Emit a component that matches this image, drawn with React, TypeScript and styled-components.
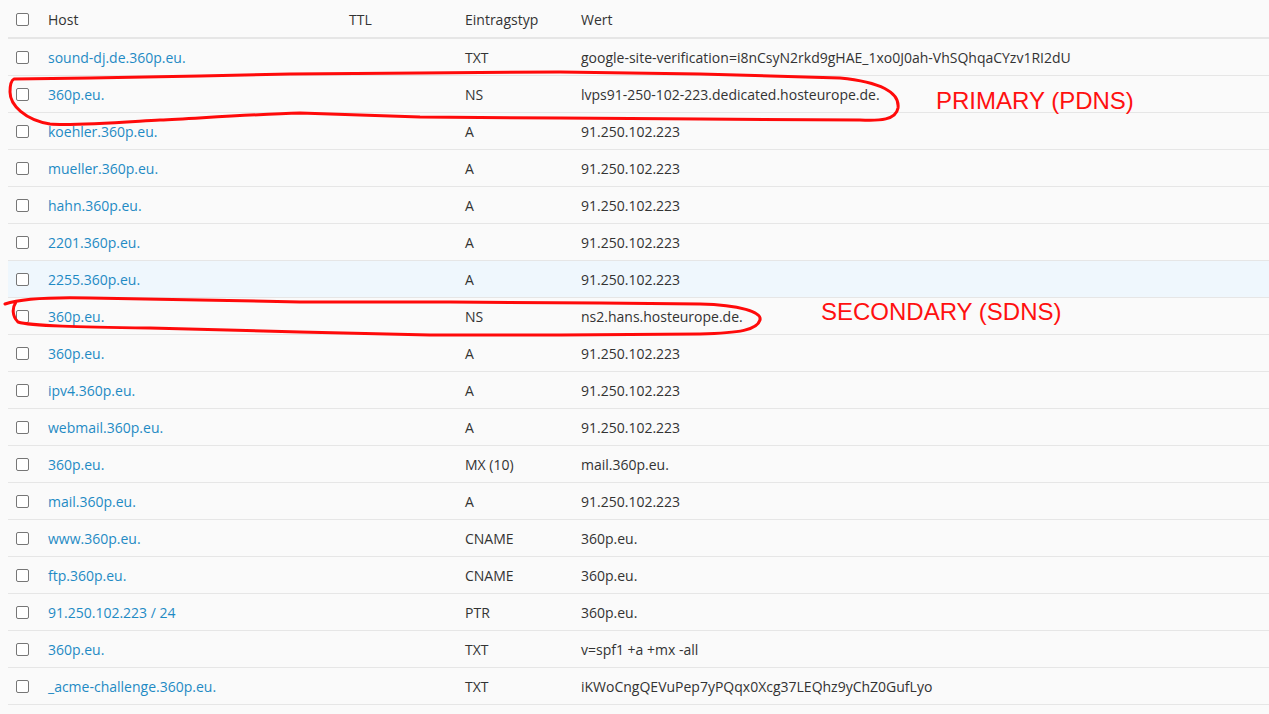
import React from "react";
import styled, { createGlobalStyle } from "styled-components";

const Global = createGlobalStyle`
  html, body { margin: 0; padding: 0; background: #fafafa; }
  body { font-family: "Open Sans", "Noto Sans", Arial, sans-serif; color: #333; }
`;

const Page = styled.div`
  position: relative;
  width: 1269px;
  height: 714px;
  overflow: hidden;
  padding-left: 8px;
  box-sizing: border-box;
  background: #fafafa;
`;

const Table = styled.div`
  display: flex;
  flex-direction: column;
`;

const Row = styled.div<{ $head?: boolean; $hl?: boolean }>`
  display: grid;
  grid-template-columns: 32px 301px 116px 116px 1fr;
  align-items: center;
  height: ${(p) => (p.$head ? "35px" : "36px")};
  padding-top: ${(p) => (p.$head ? "2px" : "0")};
  border-bottom: ${(p) => (p.$head ? "2px solid #e6e6e6" : "1px solid #e6e6e6")};
  background: ${(p) => (p.$hl ? "#eff7fd" : "transparent")};
  font-size: 14px;
  line-height: 19px;
`;

const Cell = styled.div`
  padding: 0 8px;
  white-space: nowrap;
  display: flex;
  align-items: center;
`;

const Box = styled.span`
  display: inline-block;
  width: 11px;
  height: 11px;
  border: 1px solid #767676;
  border-radius: 2px;
  background: #fff;
`;

const HostLink = styled.span`
  color: #1f8ac4;
`;

const Overlay = styled.svg`
  position: absolute;
  left: 0;
  top: 0;
  pointer-events: none;
`;

const Note = styled.div<{ $x: number; $y: number }>`
  position: absolute;
  left: ${(p) => p.$x}px;
  top: ${(p) => p.$y}px;
  font-family: "Liberation Sans", Arial, sans-serif;
  font-size: 24px;
  line-height: 24px;
  color: #ff1010;
  white-space: nowrap;
`;

const IP = "91.250.102.223";
const rows: [string, string, string][] = [
  ["sound-dj.de.360p.eu.", "TXT", "google-site-verification=i8nCsyN2rkd9gHAE_1xo0J0ah-VhSQhqaCYzv1RI2dU"],
  ["360p.eu.", "NS", "lvps91-250-102-223.dedicated.hosteurope.de."],
  ["koehler.360p.eu.", "A", IP],
  ["mueller.360p.eu.", "A", IP],
  ["hahn.360p.eu.", "A", IP],
  ["2201.360p.eu.", "A", IP],
  ["2255.360p.eu.", "A", IP],
  ["360p.eu.", "NS", "ns2.hans.hosteurope.de."],
  ["360p.eu.", "A", IP],
  ["ipv4.360p.eu.", "A", IP],
  ["webmail.360p.eu.", "A", IP],
  ["360p.eu.", "MX (10)", "mail.360p.eu."],
  ["mail.360p.eu.", "A", IP],
  ["www.360p.eu.", "CNAME", "360p.eu."],
  ["ftp.360p.eu.", "CNAME", "360p.eu."],
  ["91.250.102.223 / 24", "PTR", "360p.eu."],
  ["360p.eu.", "TXT", "v=spf1 +a +mx -all"],
  ["_acme-challenge.360p.eu.", "TXT", "iKWoCngQEVuPep7yPQqx0Xcg37LEQhz9yChZ0GufLyo"],
];

export default function App() {
  return (
    <Page>
      <Global />
      <Table>
        <Row $head>
          <Cell><Box /></Cell>
          <Cell>Host</Cell>
          <Cell>TTL</Cell>
          <Cell>Eintragstyp</Cell>
          <Cell>Wert</Cell>
        </Row>
        {rows.map(([h, t, v], i) => (
          <Row key={i} $hl={i === 6}>
            <Cell><Box /></Cell>
            <Cell><HostLink>{h}</HostLink></Cell>
            <Cell></Cell>
            <Cell>{t}</Cell>
            <Cell>{v}</Cell>
          </Row>
        ))}
      </Table>
      <Overlay width="1269" height="714" viewBox="0 0 1269 714">
        <path
          d="M 14 79 L 90 78 L 200 76 L 290 74 L 420 73 L 560 72 L 700 74 L 840 78 C 880 82, 900 92, 898 108 C 896 120, 880 121, 860 120 L 700 119 L 560 118 L 420 117 L 300 113 C 260 114, 200 118, 160 120 C 110 123, 70 126, 50 124 C 25 120, 10 105, 10 92 C 10 84, 12 80, 14 79"
          fill="none" stroke="#ff0a0a" strokeWidth="3" strokeLinecap="round" strokeLinejoin="round"
        />
        <path
          d="M 5 304 C 20 299, 50 297, 90 298 L 200 300 L 300 302 L 450 302 L 600 303 L 700 304 C 740 305, 762 312, 760 320 C 757 330, 740 333, 700 334 L 560 335 L 430 335 L 300 332 L 150 328 C 80 327, 30 326, 18 322 C 12 316, 12 308, 16 302"
          fill="none" stroke="#ff0a0a" strokeWidth="3" strokeLinecap="round" strokeLinejoin="round"
        />
      </Overlay>
      <Note $x={936} $y={89}>PRIMARY (PDNS)</Note>
      <Note $x={821} $y={300}>SECONDARY (SDNS)</Note>
    </Page>
  );
}
